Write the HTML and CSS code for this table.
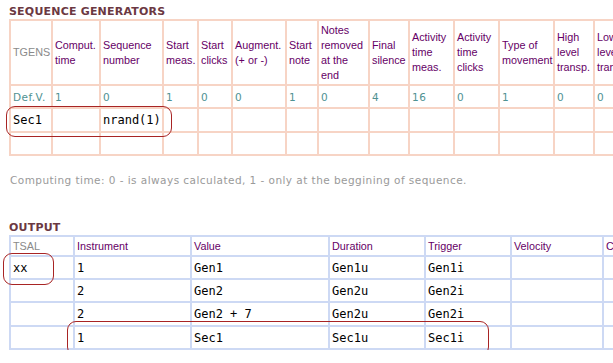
FILE: index.html
```html
<!DOCTYPE html>
<html>
<head>
<meta charset="utf-8">
<title>Sequence generators</title>
<link rel="stylesheet" href="styles.css">
</head>
<body>
<h2 class="title">SEQUENCE GENERATORS</h2>
<table class="grid gens">
  <tr class="head">
    <th class="lbl w40">TGENS</th>
    <th class="w46">Comput. time</th>
    <th class="w61">Sequence number</th>
    <th class="w33">Start meas.</th>
    <th class="w32">Start clicks</th>
    <th class="w52">Augment. (+ or -)</th>
    <th class="w30">Start note</th>
    <th class="w49">Notes removed at the end</th>
    <th class="w38">Final silence</th>
    <th class="w43">Activity time meas.</th>
    <th class="w43">Activity time clicks</th>
    <th class="w53">Type of movement</th>
    <th class="w38">High level transp.</th>
    <th class="w45">Low level transp.</th>
    <th class="w50">Rest</th>
  </tr>
  <tr class="defv">
    <td>Def.V.</td><td>1</td><td>0</td><td>1</td><td>0</td><td>0</td><td>1</td><td>0</td><td>4</td><td>16</td><td>0</td><td>1</td><td>0</td><td>0</td><td></td>
  </tr>
  <tr class="val tall">
    <td>Sec1</td><td></td><td>nrand(1)</td><td></td><td></td><td></td><td></td><td></td><td></td><td></td><td></td><td></td><td></td><td></td><td></td>
  </tr>
  <tr class="val">
    <td></td><td></td><td></td><td></td><td></td><td></td><td></td><td></td><td></td><td></td><td></td><td></td><td></td><td></td><td></td>
  </tr>
</table>
<p class="note">Computing time: 0 - is always calculated, 1 - only at the beggining of sequence.</p>
<h2 class="title">OUTPUT</h2>
<table class="grid out">
  <tr class="head">
    <th class="lbl w62">TSAL</th>
    <th class="w115">Instrument</th>
    <th class="w136">Value</th>
    <th class="w94">Duration</th>
    <th class="w84">Trigger</th>
    <th class="w90">Velocity</th>
    <th class="w80">Channel</th>
  </tr>
  <tr class="val"><td>xx</td><td>1</td><td>Gen1</td><td>Gen1u</td><td>Gen1i</td><td></td><td></td></tr>
  <tr class="val"><td></td><td>2</td><td>Gen2</td><td>Gen2u</td><td>Gen2i</td><td></td><td></td></tr>
  <tr class="val tall"><td></td><td>2</td><td>Gen2 + 7</td><td>Gen2u</td><td>Gen2i</td><td></td><td></td></tr>
  <tr class="val"><td></td><td>1</td><td>Sec1</td><td>Sec1u</td><td>Sec1i</td><td></td><td></td></tr>
</table>
<div class="mark mark-sec"></div>
<div class="mark mark-xx"></div>
<div class="mark mark-row"></div>
</body>
</html>
```
FILE: styles.css
```css
html {
  overflow: hidden;
  background: #ffffff;
}
body {
  margin: 0;
  padding: 4px 0 0 9px;
  position: relative;
  width: max-content;
  font-family: "Liberation Sans", Arial, sans-serif;
}
.title {
  margin: 0;
  height: 15px;
  line-height: 15px;
  font-family: "DejaVu Sans", Verdana, sans-serif;
  font-size: 11px;
  font-weight: bold;
  letter-spacing: 0.2px;
  color: #6b3842;
}
.grid {
  border-collapse: separate;
  border-spacing: 2px;
  table-layout: fixed;
}
.gens {
  background: #f7d4c5;
  width: 685px;
}
.out {
  background: #cdd9f4;
  width: 677px;
}
.grid th,
.grid td {
  background: #ffffff;
  padding: 0 0 0 2px;
  text-align: left;
  vertical-align: middle;
  overflow: visible;
}
.grid th {
  font-weight: normal;
  font-size: 10.8px;
  line-height: 15px;
  color: #660066;
}
.grid th.lbl {
  color: #8a8a8a;
}
.gens .head th {
  height: 63px;
}
.out .head th {
  height: 18px;
  line-height: 18px;
}
.grid td {
  height: 21px;
}
.grid .tall td {
  height: 22px;
}
.defv td {
  font-family: "DejaVu Sans", Verdana, sans-serif;
  font-size: 10.5px;
  letter-spacing: 0.45px;
  color: #4f9292;
}
.val td {
  font-family: "DejaVu Sans Mono", "Liberation Mono", monospace;
  font-size: 12px;
  color: #000000;
}
.note {
  margin: 16px 0 32px 1px;
  line-height: 16px;
  font-family: "DejaVu Sans", Verdana, sans-serif;
  font-size: 10.5px;
  letter-spacing: 0.45px;
  color: #9a9a9a;
}
.w30 { width: 28px; }
.w32 { width: 30px; }
.w33 { width: 31px; }
.w38 { width: 36px; }
.w40 { width: 38px; }
.w43 { width: 41px; }
.w45 { width: 43px; }
.w46 { width: 44px; }
.w49 { width: 47px; }
.w50 { width: 48px; }
.w52 { width: 50px; }
.w53 { width: 51px; }
.w61 { width: 59px; }
.w62 { width: 60px; }
.w80 { width: 78px; }
.w84 { width: 82px; }
.w90 { width: 88px; }
.w94 { width: 92px; }
.w115 { width: 113px; }
.w136 { width: 134px; }
.mark {
  position: absolute;
  box-sizing: border-box;
  border: 1px solid #a82424;
  border-radius: 9px;
}
.mark-sec {
  left: 6px;
  top: 106px;
  width: 166px;
  height: 31px;
}
.mark-xx {
  left: 3px;
  top: 253px;
  width: 51px;
  height: 32px;
}
.mark-row {
  left: 67px;
  top: 321px;
  width: 422px;
  height: 35px;
}
```
